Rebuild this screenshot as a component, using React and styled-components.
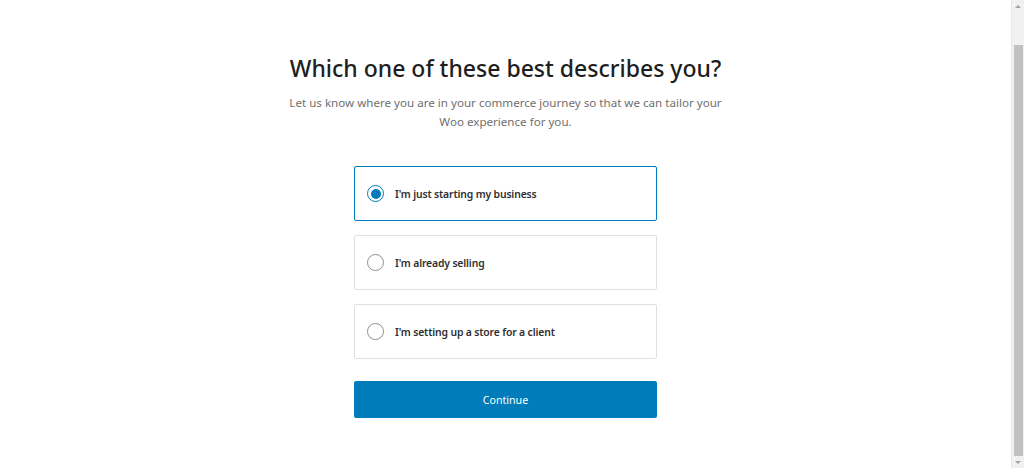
import styled, { createGlobalStyle } from 'styled-components';
import { useState } from 'react';

const GlobalStyle = createGlobalStyle`
  html, body {
    margin: 0;
    padding: 0;
    background: #fff;
    overflow: hidden;
  }
  body {
    font-family: "Noto Sans", "Open Sans", sans-serif;
    color: #1e1e1e;
  }
`;

const Page = styled.div`
  width: calc(100% - 13px);
  height: 468px;
  display: flex;
  flex-direction: column;
  align-items: center;
  padding-top: 52px;
  box-sizing: border-box;
`;

const Title = styled.h1`
  margin: 0;
  font-size: 23px;
  font-weight: 500;
  line-height: 32px;
  color: #1e1e1e;
  text-align: center;
`;

const Subtitle = styled.p`
  margin: 9px 0 0;
  width: 450px;
  font-size: 11.6px;
  line-height: 19px;
  color: #6f6f6f;
  text-align: center;
`;

const Options = styled.div`
  margin-top: 35px;
  width: 303px;
  display: flex;
  flex-direction: column;
  gap: 14px;
`;

const Option = styled.label`
  display: flex;
  align-items: center;
  gap: 11px;
  height: 55px;
  padding: 0 12px;
  box-sizing: border-box;
  border-radius: 2px;
  border: ${(p) => (p.$selected ? '1.5px solid #007cba' : '1px solid #e0e0e0')};
  cursor: pointer;
  font-size: 10.4px;
  font-weight: 600;
  letter-spacing: -0.15px;
  color: #2f2f2f;
`;

const Radio = styled.span`
  width: 17px;
  height: 17px;
  border-radius: 50%;
  box-sizing: border-box;
  flex-shrink: 0;
  border: ${(p) => (p.$selected ? '1.5px solid #007cba' : '1px solid #8f8f8f')};
  display: flex;
  align-items: center;
  justify-content: center;

  &::after {
    content: '';
    display: ${(p) => (p.$selected ? 'block' : 'none')};
    width: 10px;
    height: 10px;
    border-radius: 50%;
    background: #007cba;
  }
`;

const ContinueButton = styled.button`
  margin-top: 22px;
  width: 303px;
  height: 37px;
  border: none;
  border-radius: 2px;
  background: #007cba;
  color: #fff;
  font-family: inherit;
  font-size: 10.6px;
  cursor: pointer;
`;

/* browser scrollbar as it appears in the capture (page scrolled to the end) */
const ScrollTrack = styled.div`
  position: fixed;
  top: 0;
  right: 0;
  width: 13px;
  height: 100%;
  background: #f1f1f1;
  border-left: 1px solid #e8e8e8;
  box-sizing: border-box;
  display: flex;
  flex-direction: column;
  align-items: center;
`;

const Arrow = styled.div`
  height: 12px;
  width: 100%;
  display: flex;
  align-items: center;
  justify-content: center;

  &::before {
    content: '';
    width: 0;
    height: 0;
    border-left: 3px solid transparent;
    border-right: 3px solid transparent;
    ${(p) => (p.$down ? 'border-top: 3px solid #a3a3a3;' : 'border-bottom: 3px solid #a3a3a3;')}
  }
`;

const Thumb = styled.div`
  margin-top: 33px;
  flex: 1;
  width: 9px;
  background: #c1c1c1;
`;

const choices = [
  "I'm just starting my business",
  "I'm already selling",
  "I'm setting up a store for a client",
];

export default function App() {
  const [selected, setSelected] = useState(0);

  return (
    <>
      <GlobalStyle />
      <Page>
        <Title>Which one of these best describes you?</Title>
        <Subtitle>
          Let us know where you are in your commerce journey so that we can tailor your Woo
          experience for you.
        </Subtitle>
        <Options>
          {choices.map((text, i) => (
            <Option key={text} $selected={selected === i} onClick={() => setSelected(i)}>
              <Radio $selected={selected === i} />
              {text}
            </Option>
          ))}
        </Options>
        <ContinueButton>Continue</ContinueButton>
      </Page>
      <ScrollTrack>
        <Arrow />
        <Thumb />
        <Arrow $down />
      </ScrollTrack>
    </>
  );
}
